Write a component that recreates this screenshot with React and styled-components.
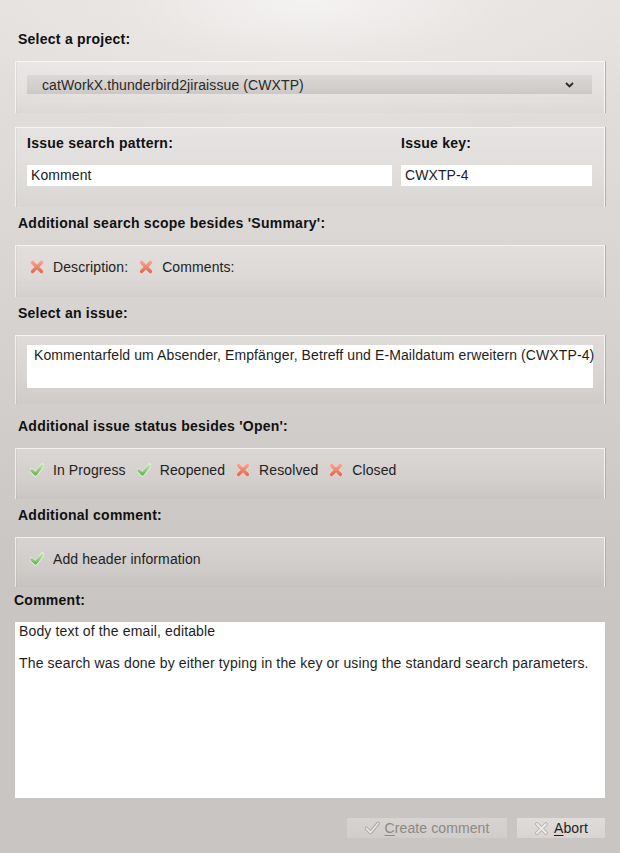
import React from "react";
import styled, { createGlobalStyle } from "styled-components";

const Global = createGlobalStyle`
  html, body { margin: 0; padding: 0; background: #c9c5c2; }
  * { box-sizing: border-box; }
`;

const Window = styled.div`
  width: 620px;
  height: 853px;
  overflow: hidden;
  padding: 31px 15px 0 15px;
  display: flex;
  flex-direction: column;
  font-family: "Liberation Sans", Arial, sans-serif;
  font-size: 14px;
  letter-spacing: 0.1px;
  color: #1e1e1e;
  background:
    radial-gradient(ellipse 420px 140px at 50% 0, rgba(246,244,243,0.95) 0%, rgba(236,233,231,0.6) 45%, rgba(236,233,231,0) 100%),
    linear-gradient(to bottom, #e3e0de 0px, #dedbd9 150px, #d6d2cf 330px, #ccc8c5 520px, #c9c5c2 600px, #c9c5c2 853px);
`;

const Label = styled.div`
  height: 16px;
  line-height: 16px;
  margin-top: ${(p) => p.$mt ?? 8}px;
  margin-bottom: 14px;
  margin-left: ${(p) => p.$ml ?? 3}px;
  font-weight: bold;
  letter-spacing: 0.25px;
  color: #111;
  white-space: nowrap;
`;

const Panel = styled.div`
  height: ${(p) => p.$h}px;
  margin-top: ${(p) => p.$mt ?? 0}px;
  padding: ${(p) => p.$pad};
  border-top: 1px solid rgba(255, 255, 255, 0.75);
  border-left: 1px solid rgba(255, 255, 255, 0.6);
  border-right: 1px solid rgba(255, 255, 255, 0.7);
  box-shadow: 1px 0 0 #b3afac, inset 1px 0 0 rgba(0,0,0,0.04);
  background: linear-gradient(to bottom, rgba(255,255,255,0.22) 0%, rgba(255,255,255,0.1) 60%, rgba(0,0,0,0.015) 100%);
`;

const Dropdown = styled.div`
  height: 19px;
  display: flex;
  align-items: center;
  justify-content: space-between;
  padding: 0 18px 0 15px;
  background: linear-gradient(to bottom, #dbd8d5 0%, #d2cfcc 60%, #cbc8c5 100%);
  color: #2a2a2a;
  white-space: nowrap;
`;

const FieldGrid = styled.div`
  display: grid;
  grid-template-columns: 365px 191px;
  column-gap: 9px;
  row-gap: 14px;
`;

const FieldLabel = styled.div`
  height: 16px;
  line-height: 16px;
  font-weight: bold;
  letter-spacing: 0.25px;
  color: #111;
`;

const Input = styled.div`
  height: 21px;
  line-height: 21px;
  padding: 0 4px;
  background: #fff;
  color: #222;
  white-space: nowrap;
`;

const CheckRow = styled.div`
  display: flex;
  align-items: center;
  height: 16px;
  line-height: 16px;
`;

const CheckItem = styled.div`
  display: flex;
  align-items: center;
  gap: 9px;
  margin-right: 11px;
  color: #222;
  white-space: nowrap;
`;

const IssueBox = styled.div`
  height: 43px;
  background: #fff;
  padding: 2px 7px 0;
  line-height: 16px;
  color: #1e1e1e;
  white-space: nowrap;
`;

const TextArea = styled.div`
  height: 176px;
  background: #fff;
  padding: 1px 4px 0;
  line-height: 16px;
  letter-spacing: 0.15px;
  color: #1e1e1e;
  white-space: pre-wrap;
`;

const ButtonRow = styled.div`
  margin-top: 20px;
  display: flex;
  justify-content: flex-end;
  gap: 10px;
`;

const Button = styled.div`
  width: ${(p) => p.$w}px;
  height: 20px;
  display: flex;
  align-items: center;
  justify-content: center;
  gap: 5px;
  background: ${(p) =>
    p.$disabled
      ? "linear-gradient(to bottom, #d6d3d0, #d0cdca)"
      : "linear-gradient(to bottom, #dfdcd9, #d7d4d1)"};
  color: ${(p) => (p.$disabled ? "#8c8986" : "#1e1e1e")};
  white-space: nowrap;
  u { text-decoration: underline; text-underline-offset: 2px; }
`;

const Check = () => (
  <svg width="14" height="14" viewBox="0 0 14 14">
    <defs>
      <linearGradient id="gck" x1="0" y1="0" x2="0" y2="1">
        <stop offset="0" stopColor="#b9e3a6" />
        <stop offset="1" stopColor="#6fb85a" />
      </linearGradient>
    </defs>
    <path d="M1.5 7.5 L5.5 11.5 L12.5 2.5" fill="none" stroke="#e9f4e3" strokeWidth="4.4" strokeLinecap="round" strokeLinejoin="round" />
    <path d="M1.8 7.6 L5.5 11.2 L12.2 2.8" fill="none" stroke="url(#gck)" strokeWidth="3" strokeLinecap="round" strokeLinejoin="round" />
  </svg>
);

const Cross = () => (
  <svg width="14" height="14" viewBox="0 0 14 14">
    <defs>
      <linearGradient id="gcx" x1="0" y1="0" x2="0" y2="1">
        <stop offset="0" stopColor="#f2a08e" />
        <stop offset="1" stopColor="#de6e58" />
      </linearGradient>
    </defs>
    <path d="M2.5 2.5 L11.5 11.5 M11.5 2.5 L2.5 11.5" fill="none" stroke="#f6cfc4" strokeWidth="4.6" strokeLinecap="round" />
    <path d="M2.5 2.5 L11.5 11.5 M11.5 2.5 L2.5 11.5" fill="none" stroke="url(#gcx)" strokeWidth="3.2" strokeLinecap="round" />
  </svg>
);

const GreyCheck = () => (
  <svg width="15" height="14" viewBox="0 0 15 14">
    <path d="M1.5 7.5 L5.5 11.5 L13 2.5" fill="none" stroke="#a9a6a3" strokeWidth="3.6" strokeLinecap="round" strokeLinejoin="round" />
    <path d="M1.5 7.5 L5.5 11.5 L13 2.5" fill="none" stroke="#e6e4e2" strokeWidth="1.8" strokeLinecap="round" strokeLinejoin="round" />
  </svg>
);

const GreyCross = () => (
  <svg width="15" height="15" viewBox="0 0 15 15">
    <path d="M3 3 L12 12 M12 3 L3 12" fill="none" stroke="#b2afac" strokeWidth="3.8" strokeLinecap="round" />
    <path d="M3 3 L12 12 M12 3 L3 12" fill="none" stroke="#ecebe9" strokeWidth="2" strokeLinecap="round" />
  </svg>
);

const Chevron = () => (
  <svg width="9" height="6" viewBox="0 0 9 6">
    <path d="M1 1 L4.5 4.5 L8 1" fill="none" stroke="#2a2a2a" strokeWidth="1.8" />
  </svg>
);

const Item = ({ on, children }) => (
  <CheckItem>
    {on ? <Check /> : <Cross />}
    <span>{children}</span>
  </CheckItem>
);

export default function App() {
  return (
    <>
      <Global />
      <Window>
        <Label $mt={0}>Select a project:</Label>
        <Panel $h={52} $pad="13px 12px 0 11px">
          <Dropdown>
            <span>catWorkX.thunderbird2jiraissue (CWXTP)</span>
            <Chevron />
          </Dropdown>
        </Panel>

        <Panel $h={80} $mt={14} $pad="7px 12px 0 11px">
          <FieldGrid>
            <FieldLabel>Issue search pattern:</FieldLabel>
            <FieldLabel>Issue key:</FieldLabel>
            <Input>Komment</Input>
            <Input>CWXTP-4</Input>
          </FieldGrid>
        </Panel>

        <Label>Additional search scope besides 'Summary':</Label>
        <Panel $h={52} $pad="13px 12px 0 14px">
          <CheckRow>
            <Item>Description:</Item>
            <Item>Comments:</Item>
          </CheckRow>
        </Panel>

        <Label>Select an issue:</Label>
        <Panel $h={69} $pad="9px 11px 0 11px">
          <IssueBox>
            Kommentarfeld um Absender, Empfänger, Betreff und E-Maildatum erweitern (CWXTP-4)
          </IssueBox>
        </Panel>

        <Label $mt={14}>Additional issue status besides 'Open':</Label>
        <Panel $h={51} $pad="13px 12px 0 14px">
          <CheckRow>
            <Item on>In Progress</Item>
            <Item on>Reopened</Item>
            <Item>Resolved</Item>
            <Item>Closed</Item>
          </CheckRow>
        </Panel>

        <Label>Additional comment:</Label>
        <Panel $h={50} $pad="13px 12px 0 14px">
          <CheckRow>
            <Item on>Add header information</Item>
          </CheckRow>
        </Panel>

        <Label $mt={5} $ml={-1}>Comment:</Label>
        <TextArea>
          {"Body text of the email, editable\n\nThe search was done by either typing in the key or using the standard search parameters."}
        </TextArea>

        <ButtonRow>
          <Button $w={160} $disabled>
            <GreyCheck />
            <span><u>C</u>reate comment</span>
          </Button>
          <Button $w={88}>
            <GreyCross />
            <span><u>A</u>bort</span>
          </Button>
        </ButtonRow>
      </Window>
    </>
  );
}
